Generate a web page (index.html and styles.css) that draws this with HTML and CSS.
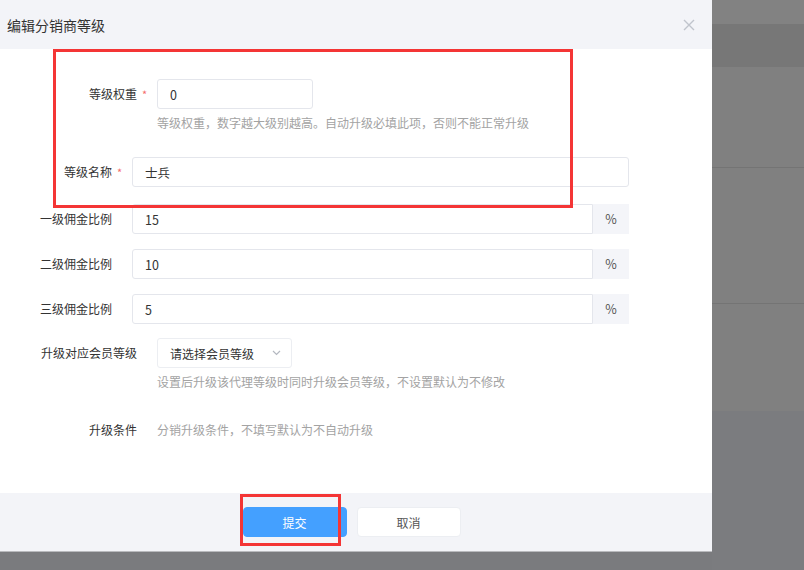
FILE: index.html
```html
<!DOCTYPE html>
<html lang="zh-CN">
<head>
  <meta charset="UTF-8">
  <meta name="viewport" content="width=device-width, initial-scale=1.0">
  <title>编辑分销商等级</title>
  <link rel="stylesheet" href="styles.css">
</head>
<body>
  <div class="screen">
    <!-- Dialog -->
    <div class="dialog-col">
      <div class="dialog">
        <div class="dialog-header">
          <span class="dialog-title">编辑分销商等级</span>
          <span class="dialog-close">
            <svg width="12" height="12" viewBox="0 0 12 12"><path d="M1 1L11 11M11 1L1 11" stroke="#c0c4cc" stroke-width="1.4" fill="none"/></svg>
          </span>
        </div>

        <div class="dialog-body">
          <form class="form">
            <div class="row row-wide r1">
              <label class="label">等级权重<span class="req">*</span></label>
              <div class="field">
                <input class="input input-short" type="text" value="0">
                <div class="help">等级权重，数字越大级别越高。自动升级必填此项，否则不能正常升级</div>
              </div>
            </div>

            <div class="row row-narrow r2">
              <label class="label">等级名称<span class="req">*</span></label>
              <div class="field">
                <input class="input input-full" type="text" value="士兵">
              </div>
            </div>

            <div class="row row-narrow r3">
              <label class="label">一级佣金比例</label>
              <div class="field input-group">
                <input class="input" type="text" value="15">
                <span class="addon">%</span>
              </div>
            </div>

            <div class="row row-narrow r4">
              <label class="label">二级佣金比例</label>
              <div class="field input-group">
                <input class="input" type="text" value="10">
                <span class="addon">%</span>
              </div>
            </div>

            <div class="row row-narrow r4">
              <label class="label">三级佣金比例</label>
              <div class="field input-group">
                <input class="input" type="text" value="5">
                <span class="addon">%</span>
              </div>
            </div>

            <div class="row row-wide r6">
              <label class="label">升级对应会员等级</label>
              <div class="field">
                <div class="select">
                  <span>请选择会员等级</span>
                  <svg width="9" height="6" viewBox="0 0 9 6"><path d="M1 1L4.5 4.5L8 1" stroke="#b4b8c0" stroke-width="1.2" fill="none"/></svg>
                </div>
                <div class="help">设置后升级该代理等级时同时升级会员等级，不设置默认为不修改</div>
              </div>
            </div>

            <div class="row row-wide r7">
              <label class="label">升级条件</label>
              <div class="field">
                <div class="help help-inline">分销升级条件，不填写默认为不自动升级</div>
              </div>
            </div>
          </form>
        </div>

        <div class="dialog-footer">
          <button class="btn btn-primary" type="button">提交</button>
          <button class="btn btn-default" type="button">取消</button>
        </div>

        <!-- red annotation marks -->
        <div class="mark mark-form"></div>
        <div class="mark mark-submit"></div>
      </div>
    </div>

    <!-- Masked page behind the dialog -->
    <div class="backdrop">
      <div class="band band-top"></div>
      <div class="band band-head"></div>
      <div class="band band-row"></div>
      <div class="band band-row band-row2"></div>
      <div class="band band-row band-row3"></div>
      <div class="band band-rest"></div>
    </div>
  </div>
</body>
</html>
```

FILE: styles.css
```css
/* Reset */
* {
  margin: 0;
  padding: 0;
  box-sizing: border-box;
}

body {
  width: 804px;
  height: 570px;
  overflow: hidden;
  font-family: "Noto Sans CJK SC", "Microsoft YaHei", sans-serif;
  font-size: 12px;
  color: #333;
  background: #7a7b7e;
}

.screen {
  display: flex;
  height: 570px;
}

.dialog-col {
  width: 712px;
  background: #7a7b7e;
}

.dialog {
  position: relative;
  width: 712px;
  height: 552px;
  background: #fff;
  display: flex;
  flex-direction: column;
  border-bottom: 1px solid #b9babd;
}

/* Header */
.dialog-header {
  height: 49px;
  background: #f3f4f8;
  display: flex;
  align-items: center;
  justify-content: space-between;
  padding: 0 17px 0 7px;
}

.dialog-title {
  font-size: 14px;
  color: #333;
}

.dialog-close {
  display: flex;
  align-items: center;
  width: 12px;
  height: 12px;
}

/* Body */
.dialog-body {
  height: 444px;
  padding-top: 30px;
}

.row {
  display: flex;
  align-items: flex-start;
}

.label {
  flex: none;
  margin-right: 20px;
  text-align: right;
  line-height: 30px;
  white-space: nowrap;
  color: #333;
}

.row-wide .label {
  width: 137px;
}

.row-narrow .label {
  width: 112px;
}

.req {
  display: inline-block;
  width: 0;
  text-indent: 5px;
  color: #f56c6c;
  font-size: 11px;
  vertical-align: top;
}

.r2 { margin-top: 24px; }
.r3 { margin-top: 17px; }
.r4 { margin-top: 15px; }
.r6 { margin-top: 14px; }
.r7 { margin-top: 28px; }

.input {
  height: 30px;
  padding: 0 12px;
  border: 1px solid #e4e6ec;
  border-radius: 3px;
  font-family: inherit;
  font-size: 12.5px;
  color: #333;
  background: #fff;
  outline: none;
}

.input-short {
  width: 156px;
}

.input-full {
  width: 497px;
}

.input-group {
  display: flex;
  width: 497px;
}

.input-group .input {
  flex: 1;
  border-radius: 3px 0 0 3px;
}

.addon {
  width: 36px;
  height: 30px;
  line-height: 30px;
  text-align: center;
  background: #f4f5f9;
  color: #555;
  font-size: 12.5px;
}

.help {
  margin-top: 4px;
  line-height: 20px;
  color: #a3a3a3;
  white-space: nowrap;
}

.help-inline {
  margin-top: 0;
}

.r7 .label {
  line-height: 20px;
}

.select {
  width: 135px;
  height: 30px;
  padding: 0 10px 0 12px;
  border: 1px solid #eceef2;
  border-radius: 3px;
  display: flex;
  align-items: center;
  justify-content: space-between;
  color: #333;
}

/* Footer */
.dialog-footer {
  flex: 1;
  background: #f3f4f8;
  display: flex;
  justify-content: center;
  align-items: flex-start;
  gap: 10px;
  padding: 14px 9px 0 0;
}

.btn {
  width: 104px;
  height: 30px;
  border-radius: 4px;
  font-family: inherit;
  font-size: 12px;
  cursor: pointer;
}

.btn-primary {
  background: #44a0ff;
  border: 1px solid #44a0ff;
  color: #fff;
}

.btn-default {
  background: #fff;
  border: 1px solid #eceef2;
  color: #555;
}

/* Red annotation boxes */
.mark {
  position: absolute;
  border: 3px solid #f43535;
}

.mark-form {
  left: 53px;
  top: 49px;
  width: 520px;
  height: 159px;
}

.mark-submit {
  left: 240px;
  top: 494px;
  width: 101px;
  height: 52px;
}

/* Backdrop */
.backdrop {
  flex: 1;
  display: flex;
  flex-direction: column;
  background: #7b7c7f;
}

.band-top {
  height: 25px;
  background: #828282;
  border-bottom: 1px solid #777;
}

.band-head {
  height: 42px;
  background: #777;
}

.band-row {
  height: 101px;
  background: #808080;
  border-bottom: 1px solid #747474;
}

.band-row2 {
  height: 136px;
}

.band-row3 {
  height: 107px;
  border-bottom: none;
}

.band-rest {
  flex: 1;
  background: #7b7c7f;
}
```
